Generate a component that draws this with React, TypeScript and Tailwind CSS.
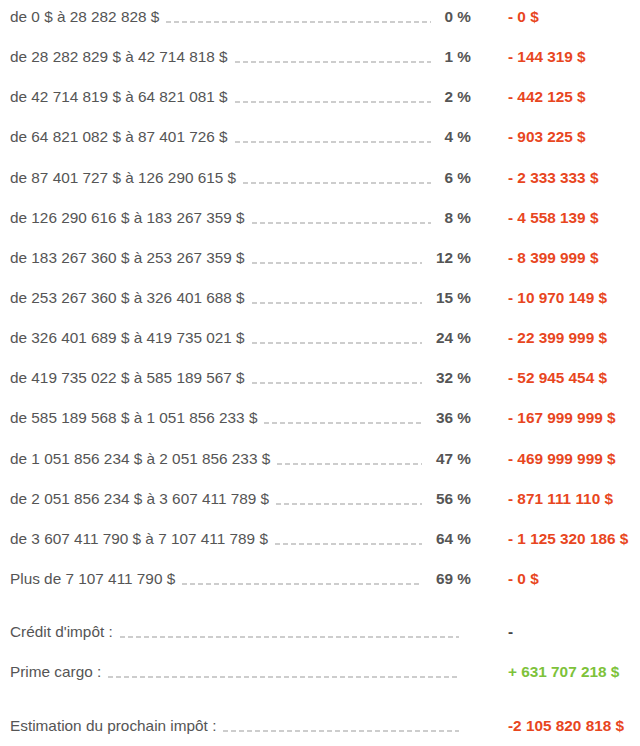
import React from "react";

interface Bracket {
  label: string;
  rate: string;
  amount: string;
}

const brackets: Bracket[] = [
  { label: "de 0 $ à 28 282 828 $", rate: "0 %", amount: "- 0 $" },
  { label: "de 28 282 829 $ à 42 714 818 $", rate: "1 %", amount: "- 144 319 $" },
  { label: "de 42 714 819 $ à 64 821 081 $", rate: "2 %", amount: "- 442 125 $" },
  { label: "de 64 821 082 $ à 87 401 726 $", rate: "4 %", amount: "- 903 225 $" },
  { label: "de 87 401 727 $ à 126 290 615 $", rate: "6 %", amount: "- 2 333 333 $" },
  { label: "de 126 290 616 $ à 183 267 359 $", rate: "8 %", amount: "- 4 558 139 $" },
  { label: "de 183 267 360 $ à 253 267 359 $", rate: "12 %", amount: "- 8 399 999 $" },
  { label: "de 253 267 360 $ à 326 401 688 $", rate: "15 %", amount: "- 10 970 149 $" },
  { label: "de 326 401 689 $ à 419 735 021 $", rate: "24 %", amount: "- 22 399 999 $" },
  { label: "de 419 735 022 $ à 585 189 567 $", rate: "32 %", amount: "- 52 945 454 $" },
  { label: "de 585 189 568 $ à 1 051 856 233 $", rate: "36 %", amount: "- 167 999 999 $" },
  { label: "de 1 051 856 234 $ à 2 051 856 233 $", rate: "47 %", amount: "- 469 999 999 $" },
  { label: "de 2 051 856 234 $ à 3 607 411 789 $", rate: "56 %", amount: "- 871 111 110 $" },
  { label: "de 3 607 411 790 $ à 7 107 411 789 $", rate: "64 %", amount: "- 1 125 320 186 $" },
  { label: "Plus de 7 107 411 790 $", rate: "69 %", amount: "- 0 $" },
];

// dashed leader sitting on the text baseline
function Leader() {
  return (
    <span className="ml-[7px] flex-1 h-[2px] mb-[4px] bg-[repeating-linear-gradient(to_right,#cdcdcd_0_5px,transparent_5px_8px)]" />
  );
}

export default function App() {
  return (
    <div className="w-[640px] h-[746px] bg-white pl-[10px] pt-[7px] text-[15.35px] leading-[20px] text-[#555] font-['Liberation_Sans',Arial,sans-serif] overflow-hidden">
      {/* Tax brackets */}
      <div className="flex flex-col">
        {brackets.map((b) => (
          <div key={b.label} className="flex items-start h-[40.15px]">
            <div className="flex flex-1 items-end min-w-0">
              <span className="whitespace-nowrap">{b.label}</span>
              <Leader />
              <span className="ml-[14px] font-bold text-[#555] whitespace-nowrap">{b.rate}</span>
            </div>
            <div className="w-[37px]" />
            <div className="w-[132px] font-bold text-[#e8461e] whitespace-nowrap">{b.amount}</div>
          </div>
        ))}
      </div>

      {/* Totals */}
      <div className="mt-[13px] flex flex-col">
        <div className="flex items-start h-[40px]">
          <div className="flex flex-1 items-end min-w-0">
            <span className="whitespace-nowrap">Crédit d'impôt :</span>
            <Leader />
          </div>
          <div className="w-[49px]" />
          <div className="w-[132px] font-bold text-[#444]">-</div>
        </div>
        <div className="flex items-start h-[53.5px]">
          <div className="flex flex-1 items-end min-w-0">
            <span className="whitespace-nowrap">Prime cargo :</span>
            <Leader />
          </div>
          <div className="w-[49px]" />
          <div className="w-[132px] font-bold text-[#7dc23a] whitespace-nowrap">+ 631 707 218 $</div>
        </div>
        <div className="flex items-start h-[30px]">
          <div className="flex flex-1 items-end min-w-0">
            <span className="whitespace-nowrap">Estimation du prochain impôt :</span>
            <Leader />
          </div>
          <div className="w-[49px]" />
          <div className="w-[132px] font-bold text-[#e8461e] whitespace-nowrap">-2 105 820 818 $</div>
        </div>
      </div>
    </div>
  );
}
